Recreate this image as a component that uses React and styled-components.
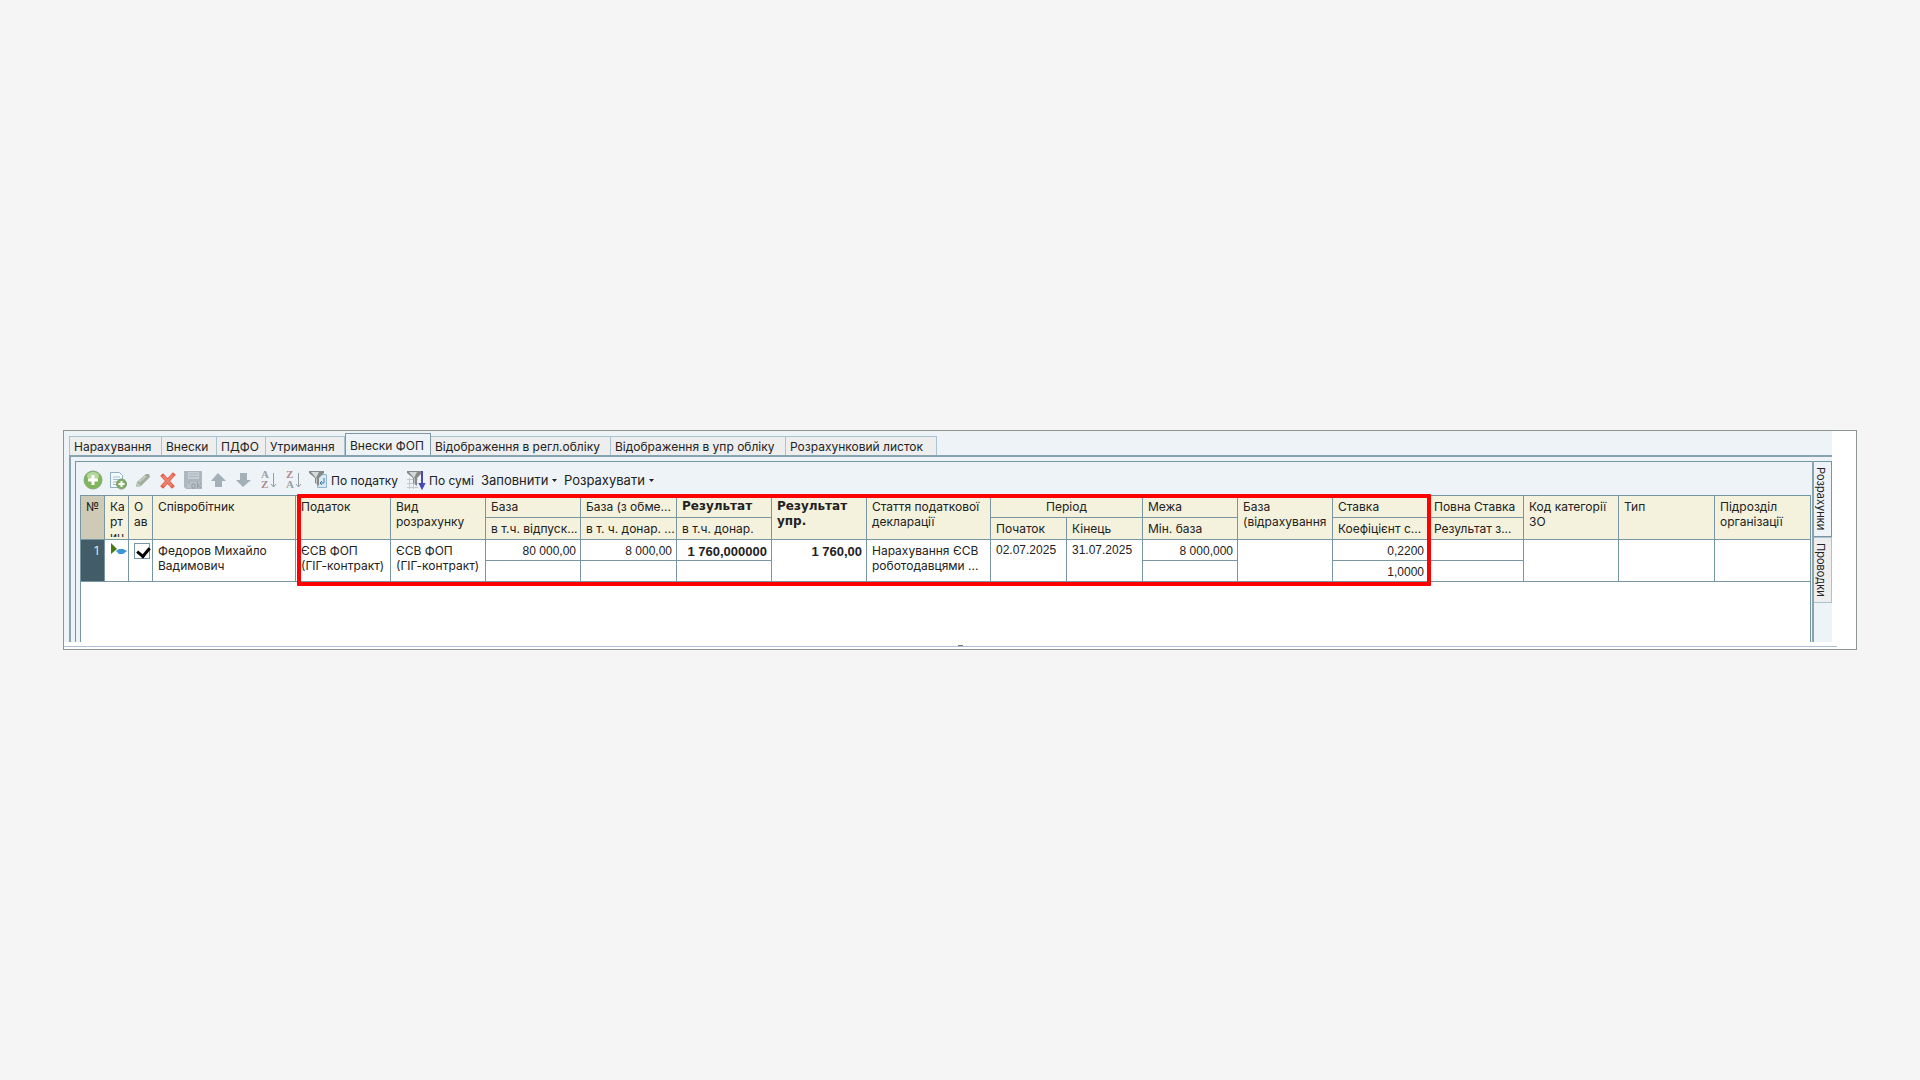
import React from 'react'
import styled, { createGlobalStyle } from 'styled-components'

const tabs = ['Нарахування', 'Внески', 'ПДФО', 'Утримання', 'Внески ФОП', 'Відображення в регл.обліку', 'Відображення в упр обліку', 'Розрахунковий листок']
const tabWidths = [93, 55, 49, 79, 86, 180, 175, 151]

const columns = [24, 24, 24, 143, 95, 95, 95, 96, 95, 95, 124, 76, 76, 95, 95, 96, 95, 95, 96, 95]

function App() {
  return (
    <>
      <GlobalStyle />
      <Page>
        <Frame>
          <Content>
            <Tabs role="tablist">
              {tabs.map((name, i) => (
                <Tab key={name} role="tab" aria-selected={i === 4} $active={i === 4} $width={tabWidths[i]}>{name}</Tab>
              ))}
            </Tabs>
            <Panel>
              <Sheet>
                <Toolbar />
                <Contributions />
              </Sheet>
              <SideTabs role="tablist">
                <SideTab role="tab" aria-selected $active>Розрахунки</SideTab>
                <SideTab role="tab" aria-selected={false}>Проводки</SideTab>
              </SideTabs>
            </Panel>
          </Content>
          <Splitter><Grip /></Splitter>
        </Frame>
      </Page>
    </>
  )
}
export default App

function Toolbar() {
  return (
    <Bar role="toolbar">
      <IconBtn aria-label="Додати"><AddIcon /></IconBtn>
      <IconBtn aria-label="Скопіювати"><CopyIcon /></IconBtn>
      <IconBtn aria-label="Змінити"><PencilIcon /></IconBtn>
      <IconBtn aria-label="Видалити"><DeleteIcon /></IconBtn>
      <IconBtn aria-label="Зберегти"><SaveIcon /></IconBtn>
      <IconBtn aria-label="Вгору"><ArrowIcon /></IconBtn>
      <IconBtn aria-label="Вниз"><ArrowIcon down /></IconBtn>
      <IconBtn aria-label="За зростанням"><SortIcon top="A" bottom="Z" /></IconBtn>
      <IconBtn aria-label="За спаданням"><SortIcon top="Z" bottom="A" /></IconBtn>
      <TextBtn $width={98}><FilterIcon />По податку</TextBtn>
      <TextBtn $width={75}><FilterIcon sum />По сумі</TextBtn>
      <MenuBtn $width={83}>Заповнити<Caret /></MenuBtn>
      <MenuBtn $width={96}>Розрахувати<Caret /></MenuBtn>
    </Bar>
  )
}

function Contributions() {
  return (
    <TableWrap>
      <Table>
        <colgroup>
          {columns.map((w, i) => <Col key={i} $width={w} />)}
        </colgroup>
        <thead>
          <HeadRow>
            <Th rowSpan="2" $dark $center>№</Th>
            <Th rowSpan="2"><Clip>Ка<br />рт<br />ин</Clip></Th>
            <Th rowSpan="2">О<br />ав</Th>
            <Th rowSpan="2">Співробітник</Th>
            <Th rowSpan="2">Податок</Th>
            <Th rowSpan="2">Вид<br />розрахунку</Th>
            <Th>База</Th>
            <Th>База (з обме...</Th>
            <Th $bold>Результат</Th>
            <Th rowSpan="2" $bold>Результат<br />упр.</Th>
            <Th rowSpan="2">Стаття податкової<br />декларації</Th>
            <Th colSpan="2" $center>Період</Th>
            <Th>Межа</Th>
            <Th rowSpan="2">База<br />(відрахування</Th>
            <Th>Ставка</Th>
            <Th>Повна Ставка</Th>
            <Th rowSpan="2">Код категорії<br />ЗО</Th>
            <Th rowSpan="2">Тип</Th>
            <Th rowSpan="2" $last>Підрозділ<br />організації</Th>
          </HeadRow>
          <HeadRow>
            <Th>в т.ч. відпуск...</Th>
            <Th>в т. ч. донар. ...</Th>
            <Th>в т.ч. донар.</Th>
            <Th>Початок</Th>
            <Th>Кінець</Th>
            <Th>Мін. база</Th>
            <Th>Коефіцієнт с...</Th>
            <Th>Результат з...</Th>
          </HeadRow>
        </thead>
        <tbody>
          <BodyRow>
            <NumberCell rowSpan="2">1</NumberCell>
            <Td rowSpan="2"><StateIcon /></Td>
            <Td rowSpan="2"><Check type="checkbox" defaultChecked aria-label="Обраний" /></Td>
            <Td rowSpan="2">Федоров Михайло<br />Вадимович</Td>
            <Td rowSpan="2">ЄСВ ФОП<br />(ГІГ-контракт)</Td>
            <Td rowSpan="2">ЄСВ ФОП<br />(ГІГ-контракт)</Td>
            <NumTd>80 000,00</NumTd>
            <NumTd>8 000,00</NumTd>
            <NumTd $bold>1 760,000000</NumTd>
            <NumTd rowSpan="2" $bold>1 760,00</NumTd>
            <Td rowSpan="2">Нарахування ЄСВ<br />роботодавцями ...</Td>
            <DateTd rowSpan="2">02.07.2025</DateTd>
            <DateTd rowSpan="2">31.07.2025</DateTd>
            <NumTd>8 000,000</NumTd>
            <Td rowSpan="2" />
            <NumTd>0,2200</NumTd>
            <Td />
            <Td rowSpan="2" />
            <Td rowSpan="2" />
            <Td rowSpan="2" $last />
          </BodyRow>
          <BodyRow>
            <Td />
            <Td />
            <Td />
            <Td />
            <NumTd>1,0000</NumTd>
            <Td />
          </BodyRow>
        </tbody>
      </Table>
      <Highlight />
    </TableWrap>
  )
}

// icons
const AddIcon = () => (
  <svg width="20" height="20" viewBox="0 0 20 20">
    <circle cx="10" cy="10" r="9" fill="#7fb65c" stroke="#8aa97a" />
    <ellipse cx="10" cy="6" rx="6" ry="4" fill="#b5d79d" />
    <path d="M10 5v10M5 10h10" stroke="#fff" strokeWidth="3" />
  </svg>
)
const CopyIcon = () => (
  <svg width="20" height="20" viewBox="0 0 20 20">
    <path d="M2.500 2.500h9l3 3v12h-12z" fill="#f4f9fc" stroke="#8fb0c4" />
    <path d="M5 7h7M5 9.500h7M5 12h5M5 14.500h4" stroke="#9dc0d8" />
    <circle cx="13.500" cy="14" r="5" fill="#7fae63" stroke="#7d9d6d" />
    <path d="M13.500 11v6M10.500 14h6" stroke="#fff" strokeWidth="2" />
  </svg>
)
const PencilIcon = () => (
  <svg width="20" height="20" viewBox="0 0 20 20">
    <path d="M3 17l1-5 9-8h3l1 3-9 9z" fill="#a0ad9b" />
    <path d="M6 12l7-6" stroke="#c3ccbf" strokeWidth="2" />
    <path d="M3 17l1-5 4 4z" fill="#c0c8bd" />
  </svg>
)
const DeleteIcon = () => (
  <svg width="20" height="20" viewBox="0 0 20 20">
    <path d="M5 6l9 10M15 5L5 16" stroke="#e5604f" strokeWidth="4" strokeLinecap="square" />
    <path d="M5 6l9 10M15 5L5 16" stroke="#f0816f" strokeWidth="2" />
  </svg>
)
const SaveIcon = () => (
  <svg width="20" height="20" viewBox="0 0 20 20">
    <path d="M1 1h18v18H3l-2-2z" fill="#adb7bf" />
    <path d="M5 2h11v7H5z" fill="#c6ced4" />
    <path d="M6 4h9M6 6.500h9" stroke="#adb7bf" />
    <path d="M4 12h13v6H4z" fill="#b9c2c8" />
    <path d="M6 12v2M9 14h3v4H9zM14.500 12v6M18 13l-3 3 3 2" stroke="#939ea6" fill="none" />
  </svg>
)
const ArrowIcon = ({ down }) => (
  <svg width="20" height="20" viewBox="0 0 20 20">
    <path d={down ? 'M7 3h7v7h4l-8 7-7-7h4z' : 'M10 3l8 8h-4v6H7v-6H3z'} fill="#a3b0b8" />
  </svg>
)
const SortIcon = ({ top, bottom }) => (
  <svg width="20" height="24" viewBox="0 0 20 24">
    <SvgLetter x="3" y="10" fill={top === 'A' ? '#98a1a7' : '#b28a90'}>{top}</SvgLetter>
    <SvgLetter x="3" y="20" fill={bottom === 'A' ? '#98a1a7' : '#b28a90'}>{bottom}</SvgLetter>
    <path d="M15.500 5v14M13 16l2.500 3 2.500-3" stroke="#939da3" fill="none" />
  </svg>
)
const FilterIcon = ({ sum }) => (
  <svg width="20" height="20" viewBox="0 0 20 20">
    {sum
      ? <path d="M3.500 8v11M7.500 8v11M1 9.500h11M1 13.500h11M1 17.500h11" stroke="#c5c9ca" />
      : <path d="M9.500 4.500h9v13h-9z" fill="#d9eaf4" stroke="#8db5ce" />}
    <path d="M1 1h15v2l-5 5v8l-4-3V8L1 3z" fill="#86898a" />
    <path d="M3 2h8L8 8z" fill="#d5d8d8" />
    <path d="M8 8h1v6H8z" fill="#c2c5c6" />
    {sum
      ? <path d="M16 1v13M14 14h4l-2 4z" stroke="#4b48b5" strokeWidth="2" fill="#4b48b5" />
      : <path d="M16 8v5h-4M14 11l-2 2 2 2" stroke="#3d7fa8" fill="none" />}
  </svg>
)
const Caret = () => (
  <svg width="5" height="3" viewBox="0 0 5 3"><path d="M0 0h5L2.500 3z" fill="#222" /></svg>
)
const StateIcon = () => (
  <svg width="17" height="14" viewBox="0 0 17 14">
    <path d="M1 0l6 6-6 5z" fill="#437d13" />
    <path d="M6 8l3-2h4l4 2-4 3H9z" fill="#3b95d2" />
  </svg>
)

const GlobalStyle = createGlobalStyle`
  * {
    box-sizing: border-box;
  }
  body {
    margin: 0;
    background: #f5f5f5;
  }
  body, button, input {
    font-family: Inter, 'Noto Sans', sans-serif;
    font-size: 12px;
    line-height: 15px;
    color: #222;
  }
`
const Page = styled.main`
  min-height: 100vh;
  display: flex;
  align-items: center;
  padding: 0 63px;
`
const Frame = styled.section`
  flex: 1;
  min-width: 0;
  background: #fff;
  border: 1px solid #8f9590;
`
const Content = styled.div`
  margin-right: 24px;
  padding: 4px 0 0 5px;
  background: #edf3f6;
`
const Tabs = styled.div`
  display: flex;
  align-items: flex-end;
  height: 20px;
`
const Tab = styled.button`
  width: ${p => p.$width}px;
  height: ${p => p.$active ? '22px' : '19px'};
  padding: ${p => p.$active ? '2px' : 0} 0 0 4px;
  white-space: nowrap;
  text-align: left;
  border: 1px solid ${p => p.$active ? '#7d97a3' : '#a9c3d0'};
  border-width: ${p => p.$active ? '1px 1px 0' : '1px 1px 0 0'};
  background: ${p => p.$active ? '#edf3f6' : '#eee'};
  &:first-child {
    border-left-width: 1px;
  }
`
const Panel = styled.div`
  display: flex;
  padding: 4px 0 0 4px;
  border-top: 2px solid #88a4b0;
  border-left: 2px solid #88a4b0;
`
const Sheet = styled.div`
  flex: 1;
  min-width: 0;
  padding: 0 1px 0 4px;
  border: 1px solid #7895a2;
  border-width: 1px 0 0 1px;
`
const Bar = styled.div`
  display: flex;
  align-items: center;
  height: 33px;
  padding: 3px 0 0 3px;
`
const IconBtn = styled.button`
  display: flex;
  width: 25px;
  padding: 0;
  border: 0;
  background: none;
`
const TextBtn = styled.button`
  display: flex;
  align-items: center;
  gap: 3px;
  width: ${p => p.$width}px;
  padding: 0;
  white-space: nowrap;
  border: 0;
  background: none;
`
const MenuBtn = styled(TextBtn)`
  gap: 4px;
  font-size: 13px;
`
const SvgLetter = styled.text`
  font-family: 'Liberation Serif', serif;
  font-size: 11px;
  font-weight: 700;
`
const TableWrap = styled.div`
  position: relative;
  height: 147px;
  background: #fff;
  border: 1px solid #7895a2;
  border-width: 1px 1px 0;
`
const Table = styled.table`
  width: 100%;
  table-layout: fixed;
  border-collapse: separate;
  border-spacing: 0;
`
const Col = styled.col`
  width: ${p => p.$width}px;
`
const HeadRow = styled.tr`
  height: 22px;
`
const BodyRow = styled.tr`
  height: 21px;
`
const Th = styled.th`
  padding: 3px 0 0 ${p => p.$center ? 0 : 5}px;
  overflow: hidden;
  white-space: nowrap;
  vertical-align: top;
  text-align: ${p => p.$center ? 'center' : 'left'};
  font-family: ${p => p.$bold ? "'DejaVu Sans', sans-serif" : 'inherit'};
  font-weight: ${p => p.$bold ? 700 : 400};
  background: ${p => p.$dark ? '#cecab6' : '#f4f1dc'};
  border: 1px solid #7895a2;
  border-width: 0 ${p => p.$last ? 0 : 1}px 1px 0;
`
const Clip = styled.div`
  height: 38px;
  overflow: hidden;
`
const Td = styled.td`
  padding: 3px 0 0 5px;
  overflow: hidden;
  white-space: nowrap;
  vertical-align: top;
  border: 1px solid #7895a2;
  border-width: 0 ${p => p.$last ? 0 : 1}px 1px 0;
`
const DateTd = styled(Td)`
  font-family: 'Liberation Sans', sans-serif;
`
const NumTd = styled(DateTd)`
  padding: 4px 4px 0 0;
  text-align: right;
  font-size: ${p => p.$bold ? 13 : 12}px;
  font-weight: ${p => p.$bold ? 700 : 400};
`
const NumberCell = styled(Td)`
  padding-right: 5px;
  text-align: right;
  background: #435d68;
  color: #dfe5e8;
`
const Check = styled.input`
  appearance: none;
  display: block;
  width: 16px;
  height: 16px;
  margin: 0;
  background: #fff;
  border: 1px solid #7895a2;
  &:checked::after {
    content: '';
    display: block;
    width: 6px;
    height: 9px;
    margin: 1px 0 0 4px;
    border: solid #000;
    border-width: 0 3px 3px 0;
    transform: rotate(40deg);
  }
`
// red frame round the columns from the tax to the rate
const Highlight = styled.div`
  position: absolute;
  top: -2px;
  left: 12.5%;
  right: 21.9%;
  height: 92px;
  border: 4px solid #f00;
  border-radius: 1px;
`
const SideTabs = styled.div`
  width: 20px;
  border-left: 2px solid #88a4b0;
`
const SideTab = styled.button`
  display: block;
  width: 18px;
  height: ${p => p.$active ? 76 : 66}px;
  padding: 5px 3px 0 0;
  writing-mode: vertical-rl;
  text-align: left;
  font-size: 11px;
  border: 1px solid ${p => p.$active ? '#7895a2' : '#a9c3d0'};
  border-left: 0;
  background: ${p => p.$active ? '#edf3f6' : '#eee'};
`
const Splitter = styled.div`
  display: flex;
  align-items: flex-end;
  justify-content: center;
  height: 5px;
  margin: 0 19px 2px 0;
  border-bottom: 1px solid #b0bed8;
`
const Grip = styled.div`
  width: 5px;
  height: 1px;
  margin-left: 19px;
  background: #777;
`
